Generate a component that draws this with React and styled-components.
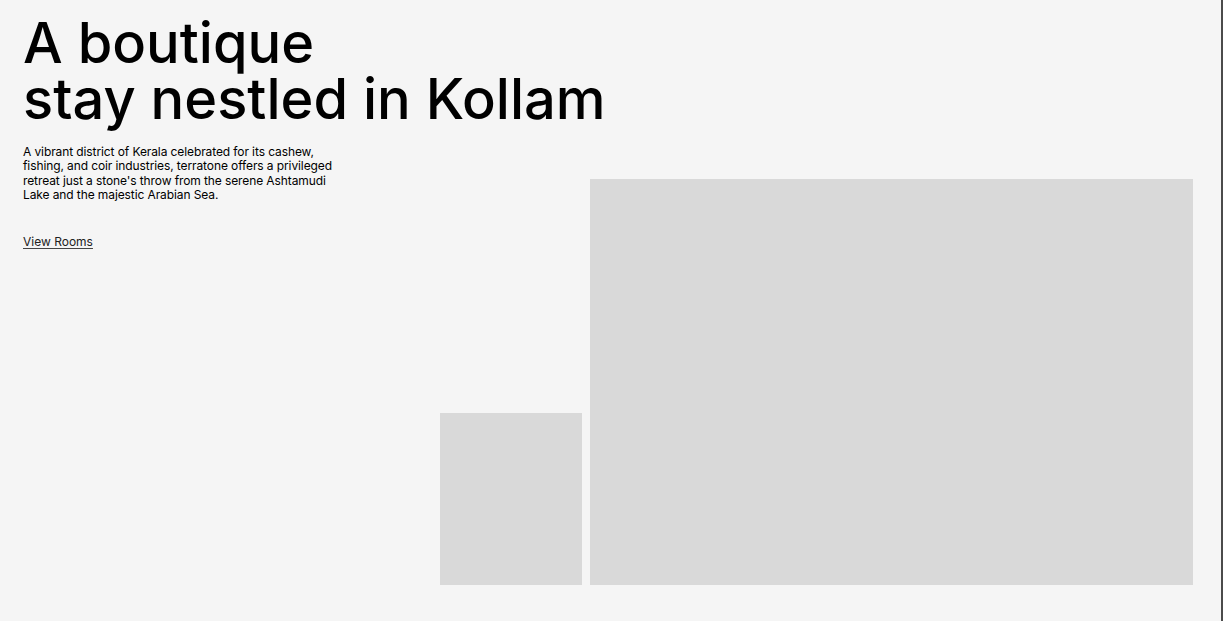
import React from 'react';
import styled, { createGlobalStyle } from 'styled-components';

const GlobalStyle = createGlobalStyle`
  * {
    box-sizing: border-box;
  }
  html, body {
    margin: 0;
    padding: 0;
    background: #f5f5f5;
  }
  body {
    font-family: Inter, "Noto Sans", Arial, sans-serif;
    color: #000;
  }
`;

const Page = styled.main`
  min-height: 100vh;
  padding: 15px 28px 36px 23px;
  border-right: 2px solid #4b4b4b;
  background: #f5f5f5;
`;

const Title = styled.h1`
  margin: 0;
  font-size: 56px;
  line-height: 56px;
  font-weight: 500;
  letter-spacing: 0;
  color: #000;
`;

const Row = styled.section`
  display: grid;
  grid-template-columns: 1fr auto;
  margin-top: 18px;
`;

const Intro = styled.div`
  display: flex;
  flex-direction: column;
  align-items: flex-start;
`;

const Text = styled.p`
  margin: 0;
  width: 320px;
  font-size: 12px;
  line-height: 14.4px;
  letter-spacing: -0.1px;
  color: #000;
`;

const Link = styled.a`
  margin-top: 32px;
  font-size: 12px;
  line-height: 14.4px;
  color: #222;
  text-decoration: underline;
  text-decoration-color: #444;
  text-underline-offset: 2px;
  cursor: pointer;
`;

const Gallery = styled.div`
  display: flex;
  align-items: flex-end;
  gap: 8px;
  margin-top: 34px;
`;

const Photo = styled.div`
  width: ${(p) => p.$w}px;
  height: ${(p) => p.$h}px;
  background: #d9d9d9;
`;

export default function App() {
  return (
    <>
      <GlobalStyle />
      <Page>
        <Title>
          A boutique
          <br />
          stay nestled in Kollam
        </Title>
        <Row>
          <Intro>
            <Text>
              A vibrant district of Kerala celebrated for its cashew, fishing, and coir
              industries, terratone offers a privileged retreat just a stone's throw from
              the serene Ashtamudi Lake and the majestic Arabian Sea.
            </Text>
            <Link>View Rooms</Link>
          </Intro>
          <Gallery>
            <Photo $w={142} $h={172} />
            <Photo $w={603} $h={406} />
          </Gallery>
        </Row>
      </Page>
    </>
  );
}
